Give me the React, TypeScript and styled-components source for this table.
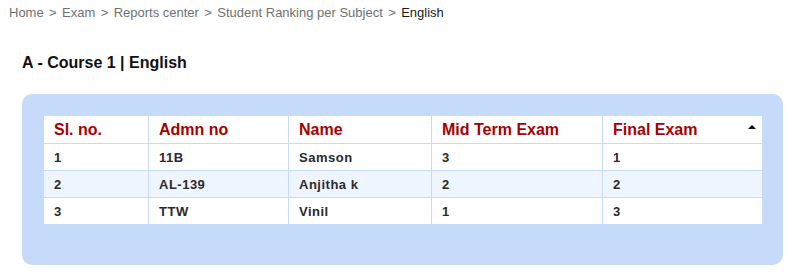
import React from 'react';
import styled, { createGlobalStyle } from 'styled-components';

const GlobalStyle = createGlobalStyle`
  body {
    margin: 0;
    background: #fff;
    font-family: "Liberation Sans", Arial, sans-serif;
  }
`;

const Page = styled.div`
  width: 789px;
  height: 273px;
  overflow: hidden;
`;

const Breadcrumb = styled.nav`
  display: flex;
  gap: 5.4px;
  box-sizing: border-box;
  padding: 4px 9px 0;
  height: 20px;
  line-height: 17px;
  font-size: 13px;
  color: #707070;
`;

const Crumb = styled.span<{ $current?: boolean }>`
  color: ${({ $current }) => ($current ? '#1a1a1a' : '#707070')};
`;

const Title = styled.h1`
  margin: 0;
  box-sizing: border-box;
  padding: 32px 0 0 22px;
  height: 74px;
  font-size: 16px;
  font-weight: bold;
  line-height: 22px;
  color: #111;
`;

const Panel = styled.section`
  margin-left: 22px;
  width: 761px;
  height: 171px;
  box-sizing: border-box;
  padding: 21px;
  background: #c6daf9;
  border-radius: 10px;
`;

const Table = styled.table`
  width: 719px;
  border-collapse: collapse;
  table-layout: fixed;
  background: #fff;
`;

const HeadCell = styled.th`
  height: 27px;
  padding: 0 10px;
  text-align: left;
  font-size: 16px;
  font-weight: bold;
  color: #a80000;
  border: 1px solid #c6daf9;
  position: relative;
`;

const SortArrow = styled.span`
  position: absolute;
  right: 6px;
  top: 9px;
  width: 0;
  height: 0;
  border-left: 4px solid transparent;
  border-right: 4px solid transparent;
  border-bottom: 4px solid #000;
`;

const Row = styled.tr<{ $striped?: boolean }>`
  background: ${({ $striped }) => ($striped ? '#eef5ff' : '#fff')};
`;

const Cell = styled.td`
  height: 26px;
  padding: 0 10px;
  font-size: 13px;
  font-weight: bold;
  letter-spacing: 0.5px;
  color: #2a2a2a;
  border: 1px solid #c6daf9;
`;

const columns = [
  { label: 'Sl. no.', width: 105 },
  { label: 'Admn no', width: 140 },
  { label: 'Name', width: 143 },
  { label: 'Mid Term Exam', width: 171 },
  { label: 'Final Exam', width: 160 },
];

const rows = [
  ['1', '11B', 'Samson', '3', '1'],
  ['2', 'AL-139', 'Anjitha k', '2', '2'],
  ['3', 'TTW', 'Vinil', '1', '3'],
];

const crumbs = ['Home', 'Exam', 'Reports center', 'Student Ranking per Subject'];

export default function App() {
  return (
    <Page>
      <GlobalStyle />
      <Breadcrumb>
        {crumbs.map((c) => (
          <React.Fragment key={c}>
            <Crumb>{c}</Crumb>
            <Crumb>&gt;</Crumb>
          </React.Fragment>
        ))}
        <Crumb $current>English</Crumb>
      </Breadcrumb>
      <Title>A - Course 1 | English</Title>
      <Panel>
        <Table>
          <colgroup>
            {columns.map((c) => (
              <col key={c.label} style={{ width: c.width }} />
            ))}
          </colgroup>
          <thead>
            <tr>
              {columns.map((c, i) => (
                <HeadCell key={c.label}>
                  {c.label}
                  {i === columns.length - 1 && <SortArrow />}
                </HeadCell>
              ))}
            </tr>
          </thead>
          <tbody>
            {rows.map((r, i) => (
              <Row key={i} $striped={i === 1}>
                {r.map((v, j) => (
                  <Cell key={j}>{v}</Cell>
                ))}
              </Row>
            ))}
          </tbody>
        </Table>
      </Panel>
    </Page>
  );
}
